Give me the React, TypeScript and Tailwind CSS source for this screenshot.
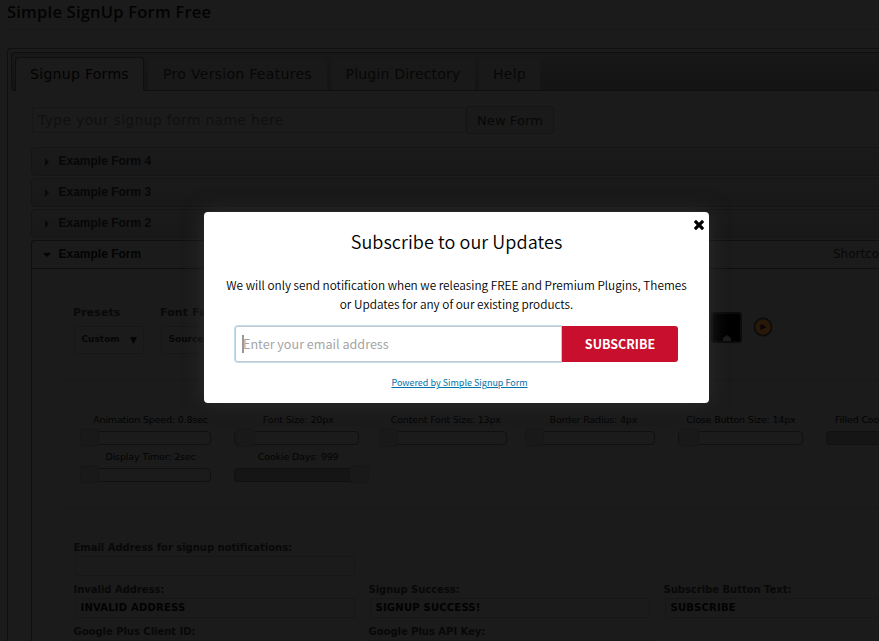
import type { ReactNode } from "react";

const tabs = [
  { label: "Pro Version Features", box: "ml-[4px] w-[179px]" },
  { label: "Plugin Directory", box: "ml-[4px] w-[144px] tracking-[0.2px]" },
  { label: "Help", box: "ml-[4px] w-[61px]" },
];

const closedForms = ["Example Form 4", "Example Form 3", "Example Form 2"];

function Slider({
  label,
  track,
  handle,
  filled = false,
}: {
  label: string;
  track: string;
  handle: string;
  filled?: boolean;
}) {
  return (
    <div className="w-[147.6px] shrink-0">
      <div className="h-[14px] pr-[2.5px] text-center text-[9.5px] leading-[14px] tracking-[-0.17px] text-[#030303]">
        {label}
      </div>
      <div className="mt-[1px] flex h-[19px] items-center">
        <div
          className={`h-[14px] shrink-0 rounded-[4px] border border-[#101010] ${filled ? "bg-[#151515]" : ""} ${track}`}
        />
        <div
          className={`h-[19px] shrink-0 rounded-[4px] border border-[#171717] bg-[#191919] ${handle}`}
        />
      </div>
    </div>
  );
}

function Field({ label, value }: { label: string; value?: string }) {
  return (
    <div className="w-[295px] shrink-0">
      <div className="h-[14px] text-[10px] font-bold leading-[14px] tracking-[-0.02px] text-[#080808]">{label}</div>
      <div className="ml-[1px] mt-[1px] h-[20px] w-[280px] border border-[#171717] pl-[5px] text-[10px] font-bold leading-[18px] tracking-[0.22px] text-[#020202]">
        {value}
      </div>
    </div>
  );
}

function Select({
  label,
  children,
  box,
  control,
}: {
  label: string;
  children: ReactNode;
  box: string;
  control: string;
}) {
  return (
    <div className={`shrink-0 ${box}`}>
      <div className="h-[16px] text-[11px] font-bold leading-[16px] tracking-[0.1px] text-[#090909]">{label}</div>
      <div
        className={`ml-[1px] mt-[5px] flex h-[28px] items-center justify-between whitespace-nowrap border border-[#171717] pl-[6.5px] pr-[6px] text-[9px] font-bold text-[#060606] ${control}`}
      >
        {children}
      </div>
    </div>
  );
}

function DownArrow() {
  return (
    <svg width="7" height="7" fill="#040404">
      <path d="M0 0H7L3.5 7Z" />
    </svg>
  );
}

function SettingsPage() {
  return (
    <div className="h-[641px] w-[1100px] whitespace-nowrap pl-[7px] font-['DejaVu_Sans',sans-serif]">
      <h1 className="h-[30px] border-b border-[#181818] font-['Open_Sans',sans-serif] text-[16.5px] font-semibold leading-[24px] tracking-[0.22px] text-[#030303]">
        Simple SignUp Form Free
      </h1>
      <div className="mt-[18px] h-[700px] rounded-tl-[4px] border-l border-t border-[#101010] pl-[3px] pt-[3px]">
        <div className="flex h-[39px] items-end rounded-l-[4px] border border-r-0 border-[#0f0f0f] bg-linear-to-b from-[#181818] to-[#141414] pl-[3px] text-[14px] tracking-[0.3px] text-[#070707]">
          <div className="-mb-[1px] h-[34px] w-[129px] rounded-t-[4px] border border-b-0 border-[#0f0f0f] bg-[#1b1b1b] text-center leading-[33px] text-[#020202]">
            Signup Forms
          </div>
          {tabs.map((tab) => (
            <div
              key={tab.label}
              className={`h-[32px] rounded-t-[4px] bg-[#191919] text-center leading-[32px] ${tab.box}`}
            >
              {tab.label}
            </div>
          ))}
        </div>

        <div className="ml-[20px] mt-[15px] flex items-center">
          <div className="ml-[1px] h-[26px] w-[434px] border border-[#171717] pl-[5px] text-[14px] leading-[25px] tracking-[0.3px] text-[#101010]">
            Type your signup form name here
          </div>
          <div className="h-[28px] w-[88px] rounded-[3px] border border-[#151515] bg-[#1a1a1a] text-center text-[13px] leading-[27px] tracking-[0.1px] text-[#070707]">
            New Form
          </div>
        </div>

        <div className="ml-[20px] mt-[13px]">
          {closedForms.map((name) => (
            <div
              key={name}
              className="mb-[2px] flex h-[29px] items-center rounded-l-[4px] border border-[#151515] bg-linear-to-b from-[#1a1a1a] to-[#181818] pl-[13px] font-['Liberation_Sans',sans-serif] text-[12px] font-bold text-[#070707]"
            >
              <svg width="4" height="8" className="mr-[9.5px]" fill="#090909">
                <path d="M0 0 4 4 0 8Z" />
              </svg>
              <span className="pb-[2px]">{name}</span>
            </div>
          ))}
          <div className="h-[500px] rounded-tl-[4px] border-l border-t border-[#0f0f0f]">
            <div className="flex h-[28px] items-center border-b border-[#0f0f0f] pl-[11px]">
              <svg width="8" height="4" className="mr-[7.5px]" fill="#020202">
                <path d="M0 0H8L4 4Z" />
              </svg>
              <span className="w-[774.5px] pb-[2px] font-['Liberation_Sans',sans-serif] text-[12px] font-bold text-[#030303]">
                Example Form
              </span>
              <span className="pb-[2px] text-[12px] leading-[16px] text-[#070707]">Shortcode:</span>
            </div>

            <div className="ml-[31px] flex h-[112px] items-start border-b border-[#181818] pl-[10px] pt-[36px]">
              <Select label="Presets" box="w-[87px]" control="w-[70px]">
                <span>Custom</span>
                <DownArrow />
              </Select>
              <Select label="Font Family" box="w-[551px]" control="w-[130px]">
                <span>Source Sans Pro</span>
                <DownArrow />
              </Select>
              <div className="mt-[7px] flex items-center">
                <div className="flex h-[31px] w-[31px] items-end justify-center rounded-[3px] border-2 border-[#0b0b0b] bg-black">
                  <svg width="8" height="6" fill="#1b1b1b">
                    <path d="M0 3 4 0 8 3V6H0Z" />
                  </svg>
                </div>
                <svg width="20" height="20" viewBox="0 0 20 20" className="-mt-[1px] ml-[11px]">
                  <circle cx="10" cy="10" r="8.6" fill="#281808" stroke="#0b0b0b" strokeWidth="1.6" />
                  <path d="M7.5 7 13.5 10 7.5 13Z" fill="#050505" />
                </svg>
              </div>
            </div>

            <div className="ml-[31px] h-[127px] border-b border-[#181818] pt-[32px]">
              <div className="flex h-[37px] pl-[15px]">
                <Slider label="Animation Speed: 0.8sec" track="ml-[2px] w-[131px]" handle="-ml-[131px] w-[19px]" />
                <Slider label="Font Size: 20px" track="ml-[8px] w-[125px]" handle="-ml-[123px] w-[19px]" />
                <Slider label="Content Font Size: 13px" track="ml-[7px] w-[127px]" handle="-ml-[128px] w-[19px]" />
                <Slider label="Border Radius: 4px" track="ml-[4px] w-[130px]" handle="-ml-[130px] w-[19px]" />
                <Slider label="Close Button Size: 14px" track="ml-[10px] w-[125px]" handle="-ml-[124px] w-[20px]" />
                <Slider label="Filled Cookie Days: 365" track="ml-[10px] w-[125px]" handle="-ml-[20px] w-[19px]" filled />
              </div>
              <div className="flex pl-[15px]">
                <Slider label="Display Timer: 2sec" track="ml-[2px] w-[131px]" handle="-ml-[131px] w-[19px]" />
                <Slider label="Cookie Days: 999" track="ml-[8px] w-[125px]" handle="-ml-[9px] w-[19px]" filled />
              </div>
            </div>

            <div className="pl-[41.5px] pt-[33px]">
              <div className="h-[42px]">
                <Field label="Email Address for signup notifications:" />
              </div>
              <div className="flex h-[42px]">
                <Field label="Invalid Address:" value="INVALID ADDRESS" />
                <Field label="Signup Success:" value="SIGNUP SUCCESS!" />
                <Field label="Subscribe Button Text:" value="SUBSCRIBE" />
              </div>
              <div className="flex">
                <Field label="Google Plus Client ID:" />
                <Field label="Google Plus API Key:" />
              </div>
            </div>
          </div>
        </div>
      </div>
    </div>
  );
}

function SubscribeDialog() {
  return (
    <div className="absolute left-[204px] top-[212px] flex h-[191px] w-[505px] flex-col items-center whitespace-nowrap rounded-[4px] bg-white font-['Noto_Sans_CJK_SC',sans-serif] text-black shadow-[0_0_20px_#2c2c2c]">
      <svg
        className="absolute right-[5px] top-[7.5px]"
        width="10"
        height="10"
        viewBox="110 -18 1188 1188"
        fill="black"
      >
        <path d="M1298 214q0 -40 -28 -68l-136 -136q-28 -28 -68 -28t-68 28l-294 294l-294 -294q-28 -28 -68 -28t-68 28l-136 136q-28 28 -28 68t28 68l294 294l-294 294q-28 28 -28 68t28 68l136 136q28 28 68 28t68 -28l294 -294l294 294q28 28 68 28t68 -28l136 -136q28 -28 28 -68t-28 -68l-294 -294l294 -294q28 -28 28 -68z" />
      </svg>
      <h2 className="mt-[17px] h-[24px] text-[18px] font-[350] leading-[24px] tracking-[0.08px]">
        Subscribe to our Updates
      </h2>
      <p className="mt-[22px] text-center text-[11.8px] font-[350] leading-[19px]">
        We will only send notification when we releasing FREE and Premium Plugins, Themes
        <br />
        or Updates for any of our existing products.
      </p>
      <div className="mr-[1px] mt-[12px] flex h-[38px] w-[444px] items-center">
        <div className="flex h-[38px] w-[328px] items-center rounded-l-[4px] border border-r-0 border-[#bfe0ec] pl-[7px] text-[12.6px] text-[#a5a5a5] shadow-[inset_0_0_0_1px_#c2c8cc]">
          <span className="-mr-[1px] h-[18px] w-[2px] bg-[#999]" />
          Enter your email address
        </div>
        <div className="h-[36px] w-[116px] rounded-r-[3px] bg-[#c8102e] text-center text-[12.5px] font-bold leading-[36px] text-white">
          SUBSCRIBE
        </div>
      </div>
      <a className="ml-[6px] mt-[13px] text-[9px] leading-[14px] text-[#0073aa] underline">
        Powered by Simple Signup Form
      </a>
    </div>
  );
}

export default function App() {
  return (
    <div className="relative h-[641px] w-[879px] overflow-hidden bg-[#1b1b1b]">
      <SettingsPage />
      <SubscribeDialog />
    </div>
  );
}
